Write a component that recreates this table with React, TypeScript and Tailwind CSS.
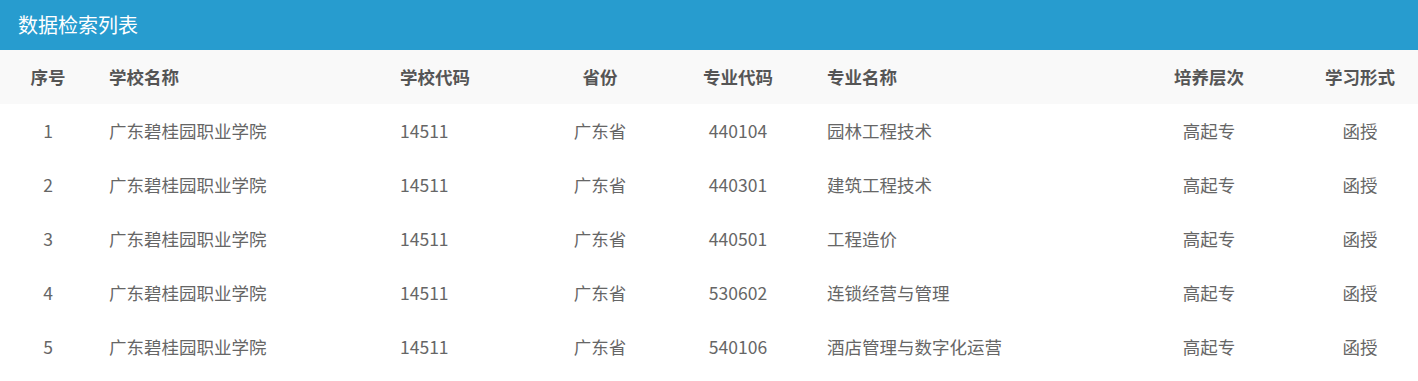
import React from "react";

const rows = [
  ["1", "广东碧桂园职业学院", "14511", "广东省", "440104", "园林工程技术", "高起专", "函授"],
  ["2", "广东碧桂园职业学院", "14511", "广东省", "440301", "建筑工程技术", "高起专", "函授"],
  ["3", "广东碧桂园职业学院", "14511", "广东省", "440501", "工程造价", "高起专", "函授"],
  ["4", "广东碧桂园职业学院", "14511", "广东省", "530602", "连锁经营与管理", "高起专", "函授"],
  ["5", "广东碧桂园职业学院", "14511", "广东省", "540106", "酒店管理与数字化运营", "高起专", "函授"],
];

const headers = ["序号", "学校名称", "学校代码", "省份", "专业代码", "专业名称", "培养层次", "学习形式"];

const cellCls = [
  "w-[96px] text-center",
  "w-[291px] pl-[13px]",
  "w-[143px] pl-[13px]",
  "w-[140px] text-center",
  "w-[136px] text-center",
  "w-[334px] pl-[21px]",
  "w-[138px] text-center",
  "flex-1 text-center pl-[24px]",
];

export default function App() {
  return (
    <div
      className="w-[1418px] h-[381px] bg-white"
      style={{ fontFamily: '"Noto Sans CJK SC", "Noto Sans", sans-serif' }}
    >
      <div className="h-[50px] bg-[#279ccf] flex items-center pl-[18px] text-white text-[20px]">
        数据检索列表
      </div>
      <div className="flex h-[54px] items-center bg-[#f9f9f9] text-[#555] font-bold text-[17.5px]">
        {headers.map((h, i) => (
          <div key={i} className={cellCls[i]}>
            {h}
          </div>
        ))}
      </div>
      {rows.map((r, ri) => (
        <div key={ri} className="flex h-[54px] items-center text-[#666] text-[17.5px]">
          {r.map((c, i) => (
            <div key={i} className={cellCls[i]}>
              {c}
            </div>
          ))}
        </div>
      ))}
    </div>
  );
}
